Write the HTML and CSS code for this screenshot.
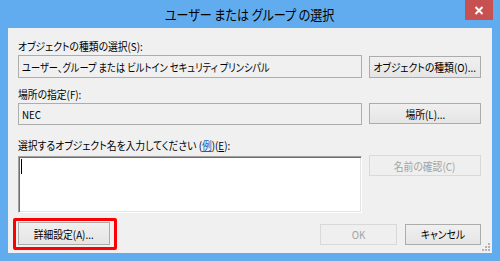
FILE: index.html
```html
<!DOCTYPE html>
<html lang="ja">
<head>
<meta charset="utf-8">
<link rel="stylesheet" href="styles.css">
</head>
<body>
<div class="window">
  <div class="titlebar">
    <div class="title"><span class="t">ユーザー または グループ の選択</span></div>
    <div class="close">
      <svg width="10" height="9" viewBox="0 0 10 9"><path d="M1.5 1 L8.5 8 M8.5 1 L1.5 8" stroke="#fff" stroke-width="2" fill="none"/></svg>
    </div>
  </div>
  <div class="client">
    <div class="label"><span class="t">オブジェクトの種類の選択(S):</span></div>
    <div class="row row1">
      <div class="field field1"><span class="t narrow">ユーザー、グループ または ビルトイン セキュリティ プリンシパル</span></div>
      <button class="btn btn1"><span class="t">オブジェクトの種類(O)...</span></button>
    </div>
    <div class="label label2"><span class="t">場所の指定(F):</span></div>
    <div class="row row2">
      <div class="field field2"><span class="t">NEC</span></div>
      <button class="btn btn2"><span class="t">場所(L)...</span></button>
    </div>
    <div class="label label3"><span class="t">選択するオブジェクト名を入力してください (<span class="link">例</span>)(<u>E</u>):</span></div>
    <div class="row row3">
      <div class="textarea"><span class="caret"></span></div>
      <button class="btn btn3" disabled><span class="t">名前の確認(C)</span></button>
    </div>
    <div class="bottom">
      <div class="highlight"><button class="btn btn-adv"><span class="t">詳細設定(A)...</span></button></div>
      <div class="actions">
        <button class="btn btn-ok" disabled><span class="t">OK</span></button>
        <button class="btn btn-cancel"><span class="t">キャンセル</span></button>
      </div>
    </div>
    <svg class="grip" width="8" height="8" viewBox="0 0 8 8">
      <rect x="6" y="0" width="2" height="2" fill="#b4b4b4"/>
      <rect x="3" y="3" width="2" height="2" fill="#b4b4b4"/>
      <rect x="6" y="3" width="2" height="2" fill="#b4b4b4"/>
      <rect x="0" y="6" width="2" height="2" fill="#b4b4b4"/>
      <rect x="3" y="6" width="2" height="2" fill="#b4b4b4"/>
      <rect x="6" y="6" width="2" height="2" fill="#b4b4b4"/>
    </svg>
  </div>
</div>
</body>
</html>
```
FILE: styles.css
```css
html, body {
  margin: 0;
  padding: 0;
}
body {
  width: 500px;
  height: 261px;
  overflow: hidden;
  font-family: "Noto Sans CJK JP", "Noto Sans", sans-serif;
  font-feature-settings: "palt";
  font-size: 11px;
  color: #000;
}
.t {
  display: inline-block;
  white-space: nowrap;
  transform: scaleX(0.89);
  transform-origin: left center;
}
.t.narrow {
  transform: scaleX(0.84);
}
.window {
  width: 500px;
  height: 261px;
  background: #61acef;
  box-sizing: border-box;
}
.titlebar {
  height: 28px;
  display: grid;
  grid-template-columns: 1fr auto 1fr;
  padding: 0 7px;
  box-sizing: border-box;
}
.title {
  grid-column: 2;
  font-size: 14px;
  line-height: 29px;
  color: #000;
  white-space: nowrap;
  display: flex;
  justify-content: center;
  width: 166px;
}
.title .t {
  transform: scaleX(0.86);
  transform-origin: center;
}
.close {
  grid-column: 3;
  justify-self: end;
  width: 28px;
  height: 20px;
  background: #c75050;
  display: flex;
  align-items: center;
  justify-content: center;
}
.client {
  position: relative;
  margin: 0 8px;
  height: 225px;
  background: #f0f0f0;
  box-sizing: border-box;
  padding: 10px 11px 0 10px;
}
.label {
  height: 16px;
  line-height: 16px;
  white-space: nowrap;
}
.label2 { margin-top: 8px; }
.label3 { margin-top: 12px; }
.link {
  color: #0066cc;
  text-decoration: underline;
}
.row {
  display: grid;
  grid-template-columns: 344px 112px;
  column-gap: 7px;
}
.row1 { margin-top: 1px; }
.row2 { margin-top: 1px; }
.row3 { margin-top: 2px; }
.field {
  box-sizing: border-box;
  border: 1px solid #adadad;
  background: #f0f0f0;
  padding: 0 3px;
  white-space: nowrap;
  display: flex;
  align-items: center;
  overflow: hidden;
}
.field1 { height: 23px; }
.field2 { height: 22px; }
.btn {
  box-sizing: border-box;
  margin: 0;
  padding: 0;
  font-family: inherit;
  font-feature-settings: "palt";
  font-size: 11px;
  color: #000;
  border: 1px solid #acacac;
  border-radius: 0;
  background: linear-gradient(#f0f0f0, #e5e5e5);
  white-space: nowrap;
  display: flex;
  align-items: center;
  justify-content: center;
}
.btn .t {
  transform-origin: center;
}
.btn:disabled {
  color: #a3a3a3;
  border-color: #d9d9d9;
  background: #efefef;
}
.btn1 { height: 22px; align-self: end; }
.btn2 { height: 21px; align-self: start; }
.btn3 { height: 21px; align-self: start; }
.textarea {
  margin-top: 1px;
  height: 57px;
  box-sizing: border-box;
  background: #fff;
  border: 1px solid;
  border-color: #a0a0a0 #fff #fff #a0a0a0;
  box-shadow: inset 1px 1px #6e6e6e, inset -1px -1px #e3e3e3;
  padding: 2px 0 0 2px;
}
.caret {
  display: block;
  width: 1px;
  height: 15px;
  background: #000;
}
.bottom {
  margin-top: 5px;
  display: flex;
  align-items: center;
  justify-content: space-between;
}
.highlight {
  margin-left: -5px;
  border: 3px solid #ff0000;
  border-radius: 2px;
  padding: 1px 4px 2px 2px;
  display: flex;
}
.btn-adv {
  width: 92px;
  height: 23px;
}
.actions {
  display: flex;
  gap: 8px;
}
.btn-ok {
  width: 77px;
  height: 21px;
}
.btn-cancel {
  width: 76px;
  height: 21px;
}
.grip {
  position: absolute;
  right: 2px;
  bottom: 2px;
}
```
